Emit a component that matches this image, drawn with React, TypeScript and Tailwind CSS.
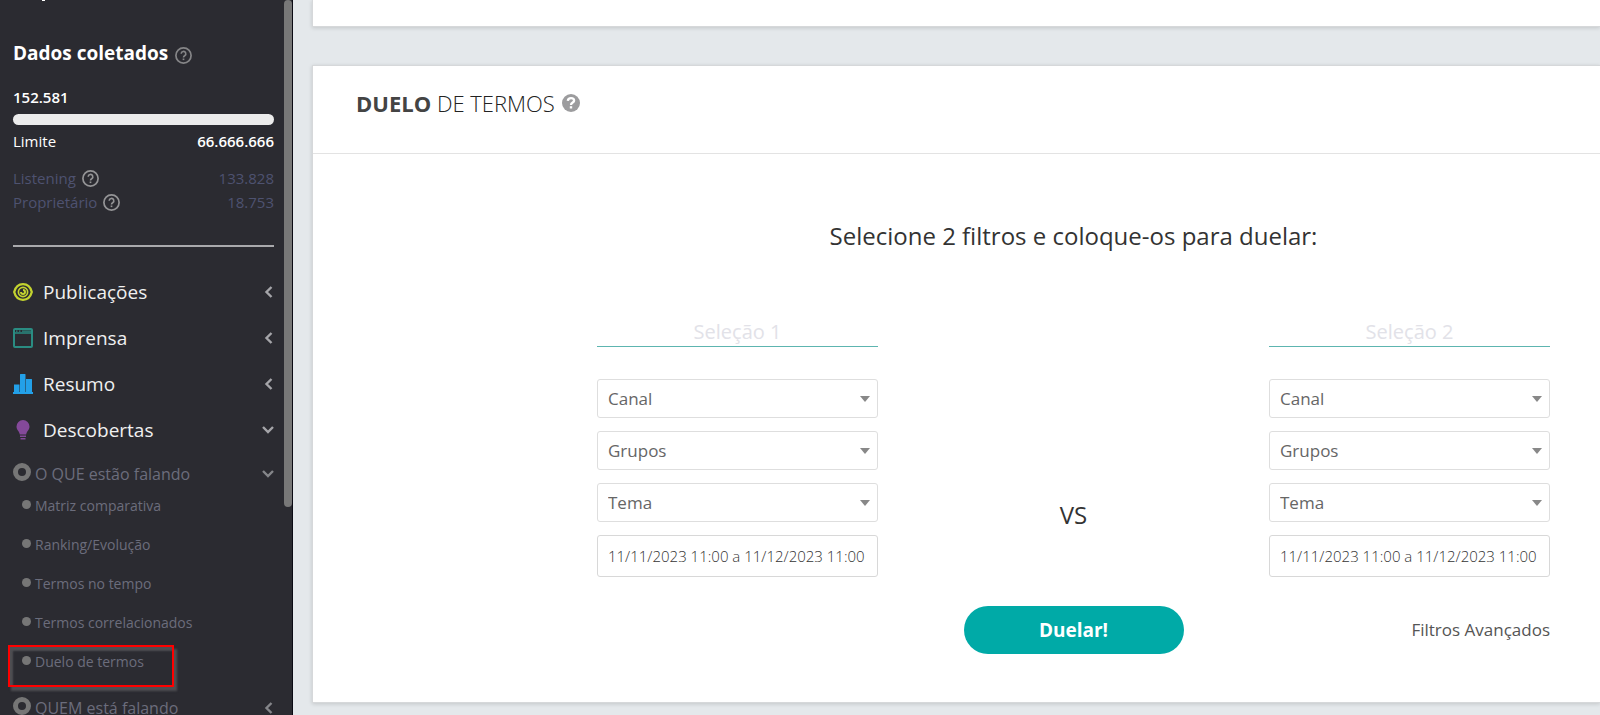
import type { ReactNode } from 'react'

const menu = [
  { label: 'Publicações', icon: <EyeIcon />, open: false },
  { label: 'Imprensa', icon: <WindowIcon />, open: false },
  { label: 'Resumo', icon: <BarsIcon />, open: false },
  { label: 'Descobertas', icon: <BulbIcon />, open: true },
]

const discoveries = [
  'Matriz comparativa',
  'Ranking/Evolução',
  'Termos no tempo',
  'Termos correlacionados',
  'Duelo de termos',
]

const filters = ['Canal', 'Grupos', 'Tema']

function EyeIcon() {
  return (
    <svg width="20" height="20" viewBox="0 0 20 20" fill="none" stroke="#c3d32f">
      <path d="M1.200 10C2.500 5 6 2.200 10 2.200s7.500 2.800 8.800 7.800c-1.300 5-4.800 7.800-8.800 7.800S2.500 15 1.200 10z" strokeWidth="2.300" />
      <circle cx="10" cy="10" r="4.600" strokeWidth="1.700" />
      <path d="M10 8a2 2 0 1 1-2 2" strokeWidth="2" />
    </svg>
  )
}

function WindowIcon() {
  return (
    <svg width="20" height="20" viewBox="0 0 20 20" fill="none" stroke="#2a8c82">
      <rect x="1" y="1" width="18" height="18" rx="1" strokeWidth="2" />
      <path d="M1 5h18" strokeWidth="1.500" />
      <path d="M3 3.200h1.500M6 3.200h1.500M9 3.200H18" strokeWidth="1.300" />
    </svg>
  )
}

function BarsIcon() {
  return (
    <svg width="20" height="20" viewBox="0 0 20 20" fill="#23a0e8">
      <path d="M0 18h1v-7.500h5.500V18H7V.500Q7 0 7.500 0h4.500q.5 0 .5.500V18h.5V5h5.500q.5 0 .5.500V18h1v2H0z" />
    </svg>
  )
}

function BulbIcon() {
  return (
    <svg width="20" height="20" viewBox="0 0 20 20" fill="#84499a">
      <path d="M10 0a6.500 6.500 0 0 1 6.500 6.500c0 3.500-2.700 4.500-3.300 8H6.800c-.6-3.500-3.300-4.500-3.300-8A6.500 6.500 0 0 1 10 0z" />
      <path d="M7 15.500h6v1.500H7zM7.500 18h5v1.500h-5z" />
    </svg>
  )
}

function HelpIcon({ className }: { className: string }) {
  return (
    <svg className={className} width="17" height="17" viewBox="0 0 17 17" fill="none" stroke="currentColor">
      <circle cx="8.500" cy="8.500" r="7.600" strokeWidth="1.700" />
      <path d="M6.200 6.800a2.300 2.300 0 1 1 3.500 1.900c-.8.500-1.200.8-1.200 1.700" strokeWidth="1.600" />
      <path d="M8.500 11.500v1.600" strokeWidth="1.700" />
    </svg>
  )
}

function HelpSolidIcon() {
  return (
    <svg width="18" height="18" viewBox="0 0 18 18" fill="none" stroke="#fff">
      <circle cx="9" cy="9" r="9" fill="#9c9c9e" stroke="none" />
      <path d="M5.800 6.900C6 5.200 7.200 4.200 9 4.200c1.900 0 3.100 1 3.100 2.500C12.100 8.600 9 8.500 9 10.900" strokeWidth="2.300" />
      <path d="M9 12.200v2.300" strokeWidth="2.400" />
    </svg>
  )
}

function Chevron({ open }: { open: boolean }) {
  return (
    <svg width="12" height="12" viewBox="0 0 12 12" fill="none" stroke="currentColor" strokeWidth="2.400">
      <path d={open ? 'M1 3l5 5 5-5' : 'M9.500 1L4.500 6l5 5'} />
    </svg>
  )
}

function UsageRow({ label, value }: { label: string; value: string }) {
  return (
    <div className="flex h-6 items-center text-[15px] text-[#4e5270]">
      <span>{label}</span>
      <HelpIcon className="ml-[6px] text-[#949496]" />
      <span className="ml-auto">{value}</span>
    </div>
  )
}

function GroupLink({ children, open }: { children: ReactNode; open: boolean }) {
  return (
    <a href="#" className="flex h-[25px] items-center justify-between text-base text-[#6b6d7c]">
      <span className="flex items-center gap-1">
        <span className="mb-1 size-[18px] rounded-full border-[5px] border-[#767676]" />
        {children}
      </span>
      <span className="text-[#85868a]">
        <Chevron open={open} />
      </span>
    </a>
  )
}

function Sidebar() {
  return (
    <aside className="relative h-screen w-[293px] shrink-0 overflow-hidden border-r border-[#0b0b14] bg-[#2b2b31] pr-[18px] pl-[13px] text-white">
      <div className="ml-[29px] h-px w-[3px] bg-white" />
      <h2 className="mt-[38px] flex h-7 items-center gap-[7px] text-[19px] font-bold">
        Dados coletados
        <HelpIcon className="mt-1 text-[#858587]" />
      </h2>
      <div className="mt-5 text-[15px] leading-5 font-semibold">152.581</div>
      <div className="mt-[7px] h-[11px] rounded-full bg-[#ececec]" />
      <div className="mt-[6px] flex justify-between text-[15px] leading-5">
        <span className="font-medium">Limite</span>
        <span className="font-semibold">66.666.666</span>
      </div>
      <div className="mt-[15px] border-b-2 border-[#a9a9ac] pb-[31px]">
        <UsageRow label="Listening" value="133.828" />
        <UsageRow label="Proprietário" value="18.753" />
      </div>

      <nav className="mt-[22px]">
        {menu.map((item) => (
          <a key={item.label} href="#" className="flex h-[46px] items-center text-[19px] text-[#f0f0f0]">
            {item.icon}
            <span className="ml-[10px]">{item.label}</span>
            <span className="ml-auto text-[#a5a5a9]">
              <Chevron open={item.open} />
            </span>
          </a>
        ))}
        <div className="mt-2">
          <GroupLink open>O QUE estão falando</GroupLink>
        </div>
        <ul>
          {discoveries.map((label) => (
            <li key={label} className="relative">
              <a href="#" className="flex h-[39px] items-center gap-1 pl-[9px] text-sm text-[#6b6d7c]">
                <span className="mb-[2px] size-[9px] rounded-full bg-[#767676]" />
                {label}
              </a>
              {label === 'Duelo de termos' && (
                <span className="pointer-events-none absolute top-[3px] -left-[5px] h-[42px] w-[166px] border-2 border-[#ff0000] shadow-[3px_4px_2px_#4e4e52,inset_3px_4px_2px_#4e4e52]" />
              )}
            </li>
          ))}
        </ul>
        <div className="mt-[14px]">
          <GroupLink open={false}>QUEM está falando</GroupLink>
        </div>
      </nav>

      <div className="absolute top-0 right-0 h-[507px] w-2 rounded-full bg-[#787878]" />
    </aside>
  )
}

function Selection({ index }: { index: number }) {
  return (
    <div className="flex flex-col gap-[13px]">
      <input
        aria-label={`Seleção ${index}`}
        placeholder={`Seleção ${index}`}
        className="mb-[19px] h-[30px] w-full border-b border-[#5db5b0] text-center text-xl outline-none placeholder:text-[#e2e2e8]"
      />
      {filters.map((name) => (
        <div key={name} className="relative">
          <select
            aria-label={name}
            className="h-[39px] w-full appearance-none rounded-[3px] border border-[#dedede] bg-white px-[10px] text-[17px] text-[#666]"
          >
            <option>{name}</option>
          </select>
          <svg className="pointer-events-none absolute top-[17px] right-2" width="10" height="6" viewBox="0 0 10 6">
            <path d="M0 0h10L5 6z" fill="#888" />
          </svg>
        </div>
      ))}
      <input
        aria-label="Período"
        defaultValue="11/11/2023 11:00 a 11/12/2023 11:00"
        className="h-[42px] w-full rounded-[3px] border border-[#d8d8d8] px-[10px] text-[15px] font-light text-[#333] outline-none"
      />
    </div>
  )
}

export default function App() {
  return (
    <div className="flex h-screen overflow-hidden bg-[#e4e8eb] font-['Open_Sans',sans-serif]">
      <Sidebar />
      <main className="min-w-0 flex-1 pl-[19px]">
        <section className="h-[27px] border-b border-l border-[#d6d8da] bg-white shadow-[0_1px_4px_rgba(0,0,0,0.15)]" />

        <section className="mt-[38px] border-y border-l border-[#d6d8da] bg-white shadow-[0_1px_4px_rgba(0,0,0,0.15)]">
          <header className="border-b border-[#e3e3e3] px-[43px] pt-[21px] pb-[34px]">
            <h1 className="flex items-center gap-[7px] text-[22px] leading-8 font-light text-[#222]">
              <span>
                <b className="font-bold text-[#444]">DUELO</b> DE TERMOS
              </span>
              <HelpSolidIcon />
            </h1>
          </header>

          <div className="pr-[50px] pb-12 pl-[284px]">
            <h2 className="pt-[66px] text-center text-2xl leading-8 font-normal text-[#333]">
              Selecione 2 filtros e coloque-os para duelar:
            </h2>
            <div className="mt-[65px] grid grid-cols-[281px_1fr_281px]">
              <Selection index={1} />
              <div className="pt-[182px] text-center text-2xl leading-8 text-[#333]">VS</div>
              <Selection index={2} />
            </div>
            <div className="mt-[29px] grid grid-cols-[1fr_220px_1fr] items-center">
              <button className="col-start-2 h-12 rounded-full bg-[#00aaa7] text-[19px] font-bold text-white">Duelar!</button>
              <a href="#" className="justify-self-end text-[17px] text-[#555]">
                Filtros Avançados
              </a>
            </div>
          </div>
        </section>
      </main>
    </div>
  )
}
